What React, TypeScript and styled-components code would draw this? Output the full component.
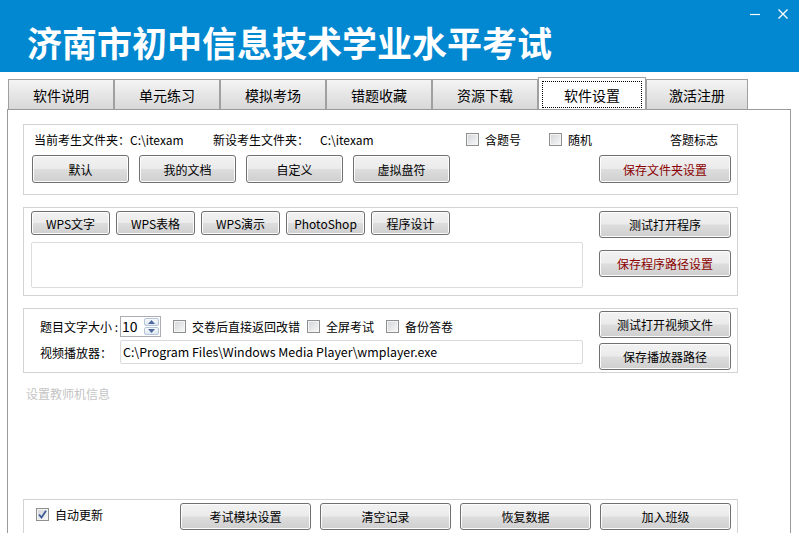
import * as React from 'react';
import styled, { createGlobalStyle, css } from 'styled-components';

const font = `"Noto Sans CJK SC", "Noto Sans", sans-serif`;
const blue = '#0288d1';

const GlobalStyle = createGlobalStyle`
  html, body {
    margin: 0;
    padding: 0;
    background: #fff;
    width: 800px;
    height: 533px;
    overflow: hidden;
  }
  body {
    font-family: ${font};
    font-size: 12px;
    color: #000;
  }
  * { box-sizing: border-box; }
`;

const Window = styled.div`
  width: 800px;
  height: 533px;
  overflow: hidden;
  display: flex;
  flex-direction: column;
`;

const Header = styled.div`
  width: 799px;
  height: 72px;
  flex-shrink: 0;
  background: ${blue};
  display: flex;
  justify-content: space-between;
  align-items: flex-start;
`;
const Title = styled.h1`
  margin: 0;
  padding: 24px 0 0 27px;
  font-family: ${font};
  font-size: 35px;
  line-height: 36px;
  font-weight: 700;
  color: #fff;
`;
const Controls = styled.div`
  display: flex;
  gap: 16px;
  padding: 8px 10px 0 0;
`;
const CtrlButton = styled.div`
  width: 12px;
  height: 12px;
  display: flex;
  align-items: center;
  justify-content: center;
`;

const TabBar = styled.div`
  display: flex;
  align-items: flex-end;
  height: 32px;
  margin-top: 5px;
  padding-left: 8px;
  flex-shrink: 0;
`;
const Tab = styled.div<{ $active?: boolean; $w?: number }>`
  width: ${(p) => p.$w ?? 106}px;
  height: 30px;
  border: 1px solid #a0a0a0;
  border-bottom: none;
  background: linear-gradient(#f4f4f4, #e6e6e6 50%, #d8d8d8);
  font-size: 14px;
  display: flex;
  align-items: center;
  justify-content: center;
  ${(p) =>
    p.$active &&
    css`
      height: 32px;
      background: #fff;
      padding: 3px 3px 1px;
    `}
`;
const FocusRect = styled.div`
  width: 100%;
  height: 100%;
  border: 1px dotted #000;
  display: flex;
  align-items: center;
  justify-content: center;
`;

const Panel = styled.div`
  margin-left: 7px;
  width: 784px;
  height: 440px;
  flex-shrink: 0;
  border: 1px solid #9a9a9a;
  border-bottom: none;
  padding: 14px 0 0 15px;
  display: flex;
  flex-direction: column;
`;

const Group = styled.div<{ $h: number; $mt?: number }>`
  width: 715px;
  height: ${(p) => p.$h}px;
  margin-top: ${(p) => p.$mt ?? 0}px;
  border: 1px solid #d3d3d3;
  flex-shrink: 0;
`;

const InfoRow = styled.div`
  display: flex;
  align-items: center;
  height: 22px;
  margin-top: 3px;
  padding-left: 10px;
`;
const Cell = styled.div<{ $w?: number; $mt?: number }>`
  ${(p) => (p.$w ? `width: ${p.$w}px;` : '')}
  margin-top: ${(p) => p.$mt ?? 0}px;
  flex-shrink: 0;
  display: flex;
  align-items: center;
  gap: 6px;
  white-space: nowrap;
`;

const ButtonRow = styled.div<{ $gap: number; $pl?: number; $mt?: number }>`
  display: flex;
  gap: ${(p) => p.$gap}px;
  padding-left: ${(p) => p.$pl ?? 0}px;
  margin-top: ${(p) => p.$mt ?? 0}px;
`;

const Button = styled.button<{ $w: number; $h?: number; $red?: boolean; $ml?: number }>`
  width: ${(p) => p.$w}px;
  height: ${(p) => p.$h ?? 28}px;
  margin-left: ${(p) => p.$ml ?? 0}px;
  flex-shrink: 0;
  border: 1px solid #707070;
  border-radius: 3px;
  background: linear-gradient(#f2f2f2 0%, #ebebeb 48%, #dddddd 52%, #cfcfcf 100%);
  box-shadow: inset 0 0 0 1px #fcfcfc;
  font-family: ${font};
  font-size: 12px;
  color: ${(p) => (p.$red ? '#8b0000' : '#000')};
  padding: 0;
  display: flex;
  align-items: center;
  justify-content: center;
`;

const SplitGroup = styled.div<{ $left: number }>`
  display: grid;
  grid-template-columns: ${(p) => p.$left}px 132px;
  column-gap: 16px;
`;
const Column = styled.div<{ $pt?: number; $pl?: number; $gap?: number }>`
  display: flex;
  flex-direction: column;
  padding-top: ${(p) => p.$pt ?? 0}px;
  padding-left: ${(p) => p.$pl ?? 0}px;
  gap: ${(p) => p.$gap ?? 0}px;
`;

const TextArea = styled.div`
  width: 552px;
  height: 46px;
  margin-top: 7px;
  border: 1px solid #dcdcdc;
  border-radius: 2px;
  background: #fff;
`;

const FieldRow = styled.div<{ $h: number; $mt?: number }>`
  display: flex;
  align-items: center;
  height: ${(p) => p.$h}px;
  margin-top: ${(p) => p.$mt ?? 0}px;
`;
const FieldLabel = styled.div`
  width: 80px;
  flex-shrink: 0;
  white-space: nowrap;
`;

const Spin = styled.div`
  width: 41px;
  height: 21px;
  border: 1px solid #abadb3;
  display: flex;
  align-items: stretch;
  margin-right: 12px;
  flex-shrink: 0;
`;
const SpinValue = styled.div`
  flex: 1;
  font-size: 14px;
  line-height: 19px;
  padding-left: 1px;
`;
const SpinArrows = styled.div`
  width: 16px;
  padding: 1px 1px 1px 0;
  display: flex;
  flex-direction: column;
  gap: 1px;
`;
const SpinArrow = styled.div`
  flex: 1;
  border: 1px solid #b5c4d8;
  border-radius: 2px;
  background: linear-gradient(#f6f9fd, #dfe8f3);
  display: flex;
  align-items: center;
  justify-content: center;
`;

const PathInput = styled.div`
  width: 463px;
  height: 24px;
  border: 1px solid #d9dadc;
  border-radius: 2px;
  font-size: 12.4px;
  line-height: 22px;
  padding-left: 2px;
  white-space: nowrap;
`;

const Hint = styled.div`
  margin-top: 13px;
  padding-left: 3px;
  height: 16px;
  line-height: 16px;
  font-size: 12px;
  color: #c4c4c4;
`;

const BottomGroup = styled.div`
  width: 715px;
  height: 40px;
  margin-top: 97px;
  border: 1px solid #d3d3d3;
  border-bottom: none;
  display: flex;
  align-items: flex-start;
  padding: 3px 0 0 12px;
  flex-shrink: 0;
`;

const Box = styled.span`
  width: 13px;
  height: 13px;
  flex-shrink: 0;
  border: 1px solid #8e8f8f;
  background: linear-gradient(135deg, #d2d4d8, #f9f9f9);
  box-shadow: inset 0 0 0 1px #f4f4f4;
  display: flex;
  align-items: center;
  justify-content: center;
`;

const CheckItem = ({ label, checked, w, mt }: { label: string; checked?: boolean; w?: number; mt?: number }) => (
  <Cell $w={w} $mt={mt}>
    <Box>
      {checked && (
        <svg width="9" height="9" viewBox="0 0 9 9">
          <path d="M1 4.5 L3.5 7.5 L8 0.8" fill="none" stroke="#3d5a98" strokeWidth="1.8" />
        </svg>
      )}
    </Box>
    <span>{label}</span>
  </Cell>
);

const tabs = ['软件说明', '单元练习', '模拟考场', '错题收藏', '资源下载', '软件设置', '激活注册'];

export default function App() {
  return (
    <Window>
      <GlobalStyle />
      <Header>
        <Title>济南市初中信息技术学业水平考试</Title>
        <Controls>
          <CtrlButton>
            <svg width="12" height="12" viewBox="0 0 12 12">
              <path d="M1 6.5 H11" stroke="#fff" strokeWidth="1.2" />
            </svg>
          </CtrlButton>
          <CtrlButton>
            <svg width="12" height="12" viewBox="0 0 12 12">
              <path d="M1.5 1.5 L10.5 10.5 M10.5 1.5 L1.5 10.5" stroke="#fff" strokeWidth="1.3" />
            </svg>
          </CtrlButton>
        </Controls>
      </Header>

      <TabBar>
        {tabs.map((t, i) =>
          i === 5 ? (
            <Tab key={t} $active $w={108}>
              <FocusRect>{t}</FocusRect>
            </Tab>
          ) : (
            <Tab key={t} $w={i === 6 ? 102 : 106}>
              {t}
            </Tab>
          )
        )}
      </TabBar>

      <Panel>
        <Group $h={71}>
          <InfoRow>
            <Cell $w={179}>当前考生文件夹：C:\itexam</Cell>
            <Cell $w={107}>新设考生文件夹：</Cell>
            <Cell $w={146}>C:\itexam</Cell>
            <CheckItem label="含题号" w={83} />
            <CheckItem label="随机" w={121} />
            <Cell>答题标志</Cell>
          </InfoRow>
          <ButtonRow $gap={10} $pl={8} $mt={5}>
            <Button $w={97}>默认</Button>
            <Button $w={97}>我的文档</Button>
            <Button $w={97}>自定义</Button>
            <Button $w={97}>虚拟盘符</Button>
            <Button $w={132} $red $ml={139}>
              保存文件夹设置
            </Button>
          </ButtonRow>
        </Group>

        <Group $h={89} $mt={12}>
          <SplitGroup $left={559}>
            <Column $pt={3} $pl={7}>
              <ButtonRow $gap={6}>
                <Button $w={79} $h={24}>WPS文字</Button>
                <Button $w={79} $h={24}>WPS表格</Button>
                <Button $w={79} $h={24}>WPS演示</Button>
                <Button $w={79} $h={24}>PhotoShop</Button>
                <Button $w={79} $h={24}>程序设计</Button>
              </ButtonRow>
              <TextArea />
            </Column>
            <Column $pt={3} $gap={12}>
              <Button $w={132} $h={27}>测试打开程序</Button>
              <Button $w={132} $h={27} $red>
                保存程序路径设置
              </Button>
            </Column>
          </SplitGroup>
        </Group>

        <Group $h={65} $mt={12}>
          <SplitGroup $left={559}>
            <Column $pt={7} $pl={16}>
              <FieldRow $h={21}>
                <FieldLabel>题目文字大小 :</FieldLabel>
                <Spin>
                  <SpinValue>10</SpinValue>
                  <SpinArrows>
                    <SpinArrow>
                      <svg width="7" height="4" viewBox="0 0 7 4">
                        <path d="M0 4 L3.5 0 L7 4 Z" fill="#4d6a9a" />
                      </svg>
                    </SpinArrow>
                    <SpinArrow>
                      <svg width="7" height="4" viewBox="0 0 7 4">
                        <path d="M0 0 L3.5 4 L7 0 Z" fill="#4d6a9a" />
                      </svg>
                    </SpinArrow>
                  </SpinArrows>
                </Spin>
                <CheckItem label="交卷后直接返回改错" w={134} />
                <CheckItem label="全屏考试" w={79} />
                <CheckItem label="备份答卷" />
              </FieldRow>
              <FieldRow $h={24} $mt={3}>
                <FieldLabel>视频播放器：</FieldLabel>
                <PathInput>C:\Program Files\Windows Media Player\wmplayer.exe</PathInput>
              </FieldRow>
            </Column>
            <Column $pt={2} $gap={5}>
              <Button $w={132} $h={27}>测试打开视频文件</Button>
              <Button $w={132} $h={27}>保存播放器路径</Button>
            </Column>
          </SplitGroup>
        </Group>

        <Hint>设置教师机信息</Hint>

        <BottomGroup>
          <CheckItem label="自动更新" checked w={144} mt={3} />
          <ButtonRow $gap={9}>
            <Button $w={131} $h={27}>考试模块设置</Button>
            <Button $w={131} $h={27}>清空记录</Button>
            <Button $w={131} $h={27}>恢复数据</Button>
            <Button $w={131} $h={27}>加入班级</Button>
          </ButtonRow>
        </BottomGroup>
      </Panel>
    </Window>
  );
}
